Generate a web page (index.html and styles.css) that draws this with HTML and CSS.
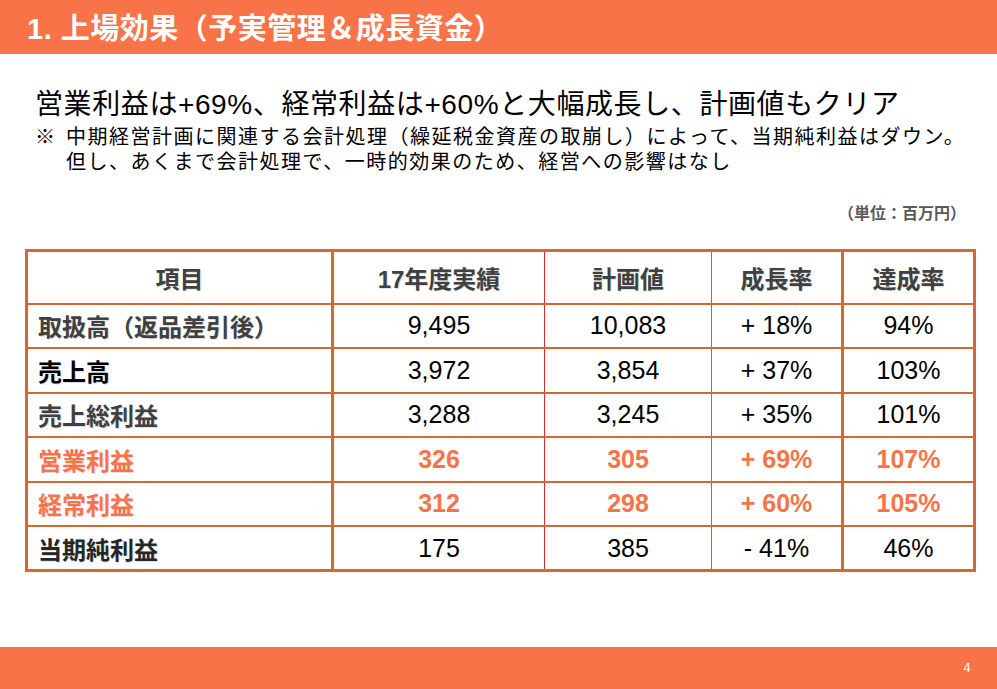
FILE: index.html
```html
<!DOCTYPE html>
<html lang="ja">
<head>
<meta charset="utf-8">
<title>上場効果</title>
<link rel="stylesheet" href="styles.css">
</head>
<body>
<header class="topbar">1. 上場効果（予実管理＆成長資金）</header>
<main class="content">
  <h1 class="lead">営業利益は+69%、経常利益は+60%と大幅成長し、計画値もクリア</h1>
  <div class="note">
    <span class="mark">※</span>
    <div class="note-text">
      <p>中期経営計画に関連する会計処理（繰延税金資産の取崩し）によって、当期純利益はダウン。</p>
      <p>但し、あくまで会計処理で、一時的効果のため、経営への影響はなし</p>
    </div>
  </div>
  <p class="unit">（単位：百万円）</p>
  <table class="results">
    <colgroup>
      <col class="c1"><col class="c2"><col class="c3"><col class="c4"><col class="c5">
    </colgroup>
    <thead>
      <tr><th class="b1">項目</th><th class="b2">17年度実績</th><th class="b3">計画値</th><th class="b4">成長率</th><th>達成率</th></tr>
    </thead>
    <tbody>
      <tr><td class="b1 lbl gray">取扱高（返品差引後）</td><td class="b2">9,495</td><td class="b3">10,083</td><td class="b4">+ 18%</td><td>94%</td></tr>
      <tr><td class="b1 lbl black">売上高</td><td class="b2">3,972</td><td class="b3">3,854</td><td class="b4">+ 37%</td><td>103%</td></tr>
      <tr><td class="b1 lbl gray">売上総利益</td><td class="b2">3,288</td><td class="b3">3,245</td><td class="b4">+ 35%</td><td>101%</td></tr>
      <tr class="hl"><td class="b1 lbl">営業利益</td><td class="b2">326</td><td class="b3">305</td><td class="b4">+ 69%</td><td>107%</td></tr>
      <tr class="hl"><td class="b1 lbl">経常利益</td><td class="b2">312</td><td class="b3">298</td><td class="b4">+ 60%</td><td>105%</td></tr>
      <tr><td class="b1 lbl dark">当期純利益</td><td class="b2">175</td><td class="b3">385</td><td class="b4">- 41%</td><td>46%</td></tr>
    </tbody>
  </table>
</main>
<footer class="footbar"><span class="page">4</span></footer>
</body>
</html>
```
FILE: styles.css
```css
* { box-sizing: border-box; }
html, body { margin: 0; padding: 0; }
body {
  width: 997px;
  height: 689px;
  overflow: hidden;
  display: flex;
  flex-direction: column;
  background: #fff;
  font-family: "Liberation Sans", "Noto Sans CJK JP", sans-serif;
  color: #000;
}
.topbar {
  height: 54px;
  background: #F97349;
  color: #fff;
  font-weight: bold;
  font-size: 29px;
  letter-spacing: 0.5px;
  display: flex;
  align-items: center;
  padding-left: 27px;
  padding-bottom: 2px;
}
.content {
  padding: 0 0 0 35px;
}
.lead {
  margin: 33px 0 0 0;
  font-size: 28px;
  font-weight: normal;
  line-height: 35px;
  letter-spacing: 0.6px;
}
.note {
  display: flex;
  margin-top: 3px;
  font-size: 20px;
  line-height: 25px;
  letter-spacing: 1.5px;
}
.mark { width: 31px; flex: none; letter-spacing: 0; }
.note-text p { margin: 0; }
.unit {
  margin: 28px 0 0 0;
  padding-right: 31px;
  text-align: right;
  font-size: 16px;
  line-height: 22px;
  font-weight: bold;
  color: #595959;
}
.results {
  margin: 24px 0 0 -10px;
  width: 948px;
  border-collapse: collapse;
  border: 3px solid #D3692F;
  table-layout: fixed;
}
.c1 { width: 306px; }
.c2 { width: 212px; }
.c3 { width: 167px; }
.c4 { width: 131px; }
.c5 { width: 132px; }
.results th, .results td {
  border-bottom: 2px solid #D3692F;
  text-align: center;
  padding: 0;
}
.results th {
  height: 53px;
  font-size: 24px;
  font-weight: bold;
  color: #404040;
  text-shadow: 1px 1px 0 rgba(0,0,0,0.12);
}
.results td {
  height: 44.5px;
  font-size: 25px;
}
.results .b1 { border-right: 3px solid #D3692F; }
.results .b2 { border-right: 1px solid #E0282A; }
.results .b3 { border-right: 1px solid #D9504F; }
.results .b4 { border-right: 3px solid #D3692F; }
.results td.lbl {
  text-align: left;
  padding-left: 10px;
  font-size: 24px;
  font-weight: bold;
  text-shadow: 1px 1px 0 rgba(0,0,0,0.12);
}
.lbl.gray { color: #404040; }
.lbl.black { color: #000; }
.lbl.dark { color: #262626; }
.hl td { color: #F7734A; font-weight: bold; }
.footbar {
  margin-top: auto;
  height: 42px;
  background: #F97349;
  display: flex;
  align-items: center;
  justify-content: flex-end;
  padding-right: 26px;
}
.page {
  color: #fff;
  font-size: 12px;
  font-family: "DejaVu Sans", sans-serif;
}
```
